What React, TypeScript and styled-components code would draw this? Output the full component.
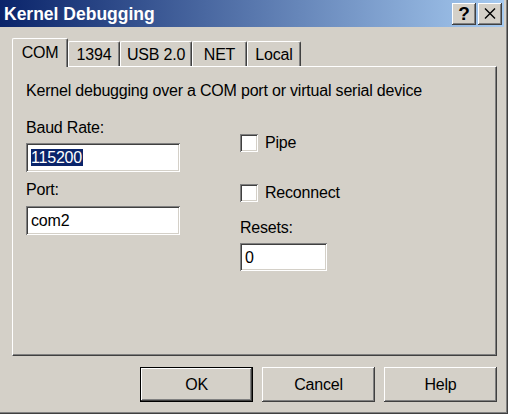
import React from "react";
import styled, { createGlobalStyle, css } from "styled-components";

const Global = createGlobalStyle`
  html, body { margin: 0; padding: 0; background: #D4D0C8; }
  body { font-family: "Liberation Sans", Arial, sans-serif; font-size: 16px; color: #000; }
  * { box-sizing: border-box; }
`;

const raised = css`
  background: #D4D0C8;
  box-shadow: inset -1px -1px #404040, inset 1px 1px #ffffff,
    inset -2px -2px #808080, inset 2px 2px #D4D0C8;
`;

const sunken = css`
  background: #ffffff;
  box-shadow: inset 1px 1px #808080, inset -1px -1px #ffffff,
    inset 2px 2px #404040, inset -2px -2px #D4D0C8;
`;

const Window = styled.div`
  width: 508px;
  height: 414px;
  background: #D4D0C8;
  padding-right: 4px;
  display: flex;
  flex-direction: column;
  box-shadow: inset -1px -1px #404040, inset -2px -2px #808080;
`;

const TitleBar = styled.div`
  height: 27px;
  display: flex;
  align-items: center;
  justify-content: space-between;
  padding: 0 2px 0 4px;
  background: linear-gradient(to right, #0A246A, #A6CAF0);
`;

const Title = styled.div`
  color: #fff;
  font-weight: bold;
  font-size: 17.5px;
  line-height: 20px;
`;

const TitleButtons = styled.div`
  display: flex;
  gap: 2px;
`;

const TitleButton = styled.div`
  ${raised};
  width: 24px;
  height: 22px;
  display: flex;
  align-items: center;
  justify-content: center;
  font-weight: bold;
  font-size: 19px;
  line-height: 18px;
  color: #000;
`;

const Body = styled.div`
  padding: 11px 0 0 12px;
  display: flex;
  flex-direction: column;
`;

const TabStrip = styled.div`
  display: flex;
  align-items: flex-end;
`;

const Tab = styled.div<{ $w: number; $active?: boolean }>`
  width: ${(p) => p.$w}px;
  height: ${(p) => (p.$active ? 29 : 25)}px;
  margin-bottom: ${(p) => (p.$active ? -1 : 0)}px;
  position: relative;
  z-index: ${(p) => (p.$active ? 1 : 0)};
  background: #D4D0C8;
  border-top: 1px solid #fff;
  border-left: 1px solid #fff;
  border-right: 1px solid #404040;
  border-radius: 2px 2px 0 0;
  box-shadow: inset -1px 0 #808080;
  display: flex;
  align-items: center;
  justify-content: center;
  padding-top: ${(p) => (p.$active ? 0 : 1)}px;
  font-size: 16px;
  letter-spacing: -0.2px;
`;

const Panel = styled.div`
  width: 485px;
  height: 290px;
  border-top: 1px solid #fff;
  border-left: 1px solid #fff;
  border-right: 1px solid #404040;
  border-bottom: 1px solid #404040;
  box-shadow: inset -1px -1px #808080;
  padding: 15px 0 0 13px;
  letter-spacing: -0.2px;
`;

const Text = styled.div<{ $mt?: number }>`
  line-height: 18px;
  margin-top: ${(p) => p.$mt ?? 0}px;
  white-space: nowrap;
`;

const Columns = styled.div`
  display: grid;
  grid-template-columns: 154px 1fr;
  column-gap: 60px;
  margin-top: 19px;
`;

const Column = styled.div`
  display: flex;
  flex-direction: column;
  align-items: flex-start;
`;

const Field = styled.div<{ $w: number; $h: number; $mt: number }>`
  ${sunken};
  width: ${(p) => p.$w}px;
  height: ${(p) => p.$h}px;
  margin-top: ${(p) => p.$mt}px;
  padding-left: 5px;
  display: flex;
  align-items: center;
  line-height: 17px;
`;

const Selected = styled.span`
  background: #0A246A;
  color: #fff;
  padding-right: 1px;
`;

const CheckRow = styled.div<{ $mt: number }>`
  display: flex;
  align-items: center;
  gap: 7px;
  height: 18px;
  margin-top: ${(p) => p.$mt}px;
`;

const CheckBox = styled.div`
  ${sunken};
  width: 18px;
  height: 18px;
`;

const ButtonRow = styled.div`
  width: 485px;
  margin-top: 11px;
  display: flex;
  justify-content: flex-end;
  gap: 9px;
`;

const Button = styled.div<{ $default?: boolean }>`
  width: 113px;
  height: 35px;
  display: flex;
  align-items: center;
  justify-content: center;
  background: #D4D0C8;
  box-shadow: ${(p) =>
    p.$default
      ? "inset 0 0 0 1px #000, inset -2px -2px #404040, inset 2px 2px #fff, inset -3px -3px #808080"
      : "inset -1px -1px #404040, inset 1px 1px #fff, inset -2px -2px #808080, inset 2px 2px #D4D0C8"};
  font-size: 16px;
  letter-spacing: -0.2px;
`;

const tabs = [
  { label: "COM", w: 56, active: true },
  { label: "1394", w: 52 },
  { label: "USB 2.0", w: 72 },
  { label: "NET", w: 55 },
  { label: "Local", w: 54 },
];

export default function App() {
  return (
    <>
      <Global />
      <Window>
        <TitleBar>
          <Title>Kernel Debugging</Title>
          <TitleButtons>
            <TitleButton>?</TitleButton>
            <TitleButton>
              <svg width="12" height="11" viewBox="0 0 12 11">
                <path d="M1 0.5 L11 10.5 M11 0.5 L1 10.5" stroke="#000" strokeWidth="1.4" fill="none" />
              </svg>
            </TitleButton>
          </TitleButtons>
        </TitleBar>
        <Body>
          <TabStrip>
            {tabs.map((t) => (
              <Tab key={t.label} $w={t.w} $active={t.active}>
                {t.label}
              </Tab>
            ))}
          </TabStrip>
          <Panel>
            <Text>Kernel debugging over a COM port or virtual serial device</Text>
            <Columns>
              <Column>
                <Text>Baud Rate:</Text>
                <Field $w={154} $h={29} $mt={6}>
                  <Selected>115200</Selected>
                </Field>
                <Text $mt={9}>Port:</Text>
                <Field $w={154} $h={29} $mt={7}>
                  com2
                </Field>
              </Column>
              <Column>
                <CheckRow $mt={15}>
                  <CheckBox />
                  <span>Pipe</span>
                </CheckRow>
                <CheckRow $mt={32}>
                  <CheckBox />
                  <span>Reconnect</span>
                </CheckRow>
                <Text $mt={17}>Resets:</Text>
                <Field $w={87} $h={28} $mt={6}>
                  0
                </Field>
              </Column>
            </Columns>
          </Panel>
          <ButtonRow>
            <Button $default>OK</Button>
            <Button>Cancel</Button>
            <Button>Help</Button>
          </ButtonRow>
        </Body>
      </Window>
    </>
  );
}
